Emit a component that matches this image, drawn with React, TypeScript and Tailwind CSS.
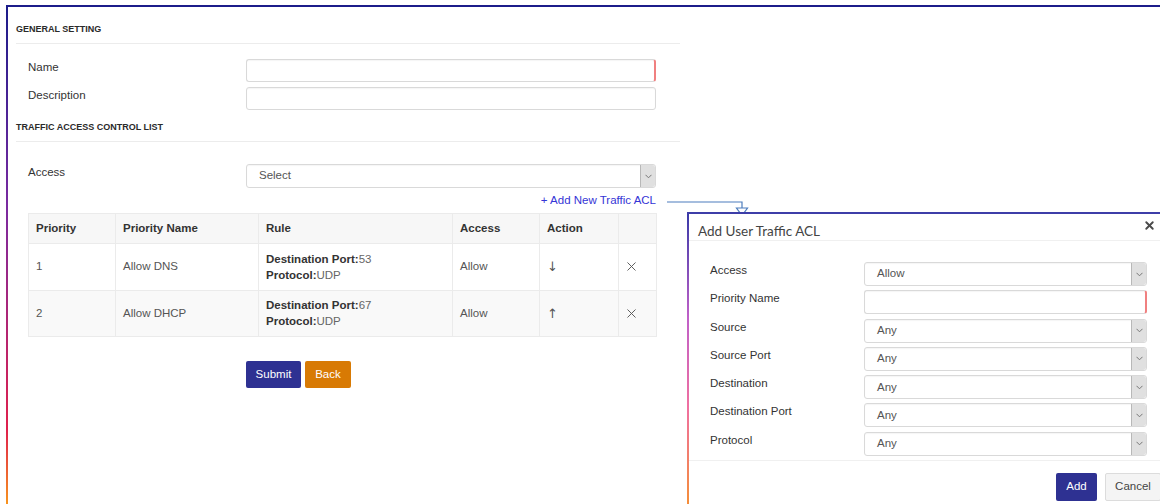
import { X } from 'lucide-react';

type AclRow = {
  priority: string;
  name: string;
  port: string;
  protocol: string;
  access: string;
  move: string;
  shade: boolean;
};

const ROWS: AclRow[] = [
  { priority: '1', name: 'Allow DNS', port: '53', protocol: 'UDP', access: 'Allow', move: '↓', shade: false },
  { priority: '2', name: 'Allow DHCP', port: '67', protocol: 'UDP', access: 'Allow', move: '↑', shade: true },
];

const MODAL_FIELDS = [
  { label: 'Access', value: 'Allow', select: true },
  { label: 'Priority Name', value: '', select: false },
  { label: 'Source', value: 'Any', select: true },
  { label: 'Source Port', value: 'Any', select: true },
  { label: 'Destination', value: 'Any', select: true },
  { label: 'Destination Port', value: 'Any', select: true },
  { label: 'Protocol', value: 'Any', select: true },
];

function Chevron() {
  return (
    <div className="flex h-full w-[15px] items-center justify-center rounded-r-[3px] border-l border-[#b8b8b8] bg-[#e0e0e0]">
      <svg width="7" height="5" viewBox="0 0 7 5" fill="none">
        <polyline points="0.5,0.8 3.5,3.8 6.5,0.8" stroke="#777" strokeWidth="1" />
      </svg>
    </div>
  );
}

function SelectBox({ value, width, height }: { value: string; width: string; height: string }) {
  return (
    <div className={`flex ${width} ${height} items-center justify-between rounded-[3px] border border-[#d9d9d9] bg-white shadow-[inset_0_1px_1px_rgba(0,0,0,0.04)]`}>
      <span className="pl-[12px] text-[11.5px] text-[#555]">{value}</span>
      <Chevron />
    </div>
  );
}

function TextBox({ width, height, required }: { width: string; height: string; required?: boolean }) {
  return (
    <div
      className={`${width} ${height} rounded-[3px] border border-[#d9d9d9] bg-white shadow-[inset_0_1px_1px_rgba(0,0,0,0.04)] ${
        required ? 'border-r-[#f08080] border-r-2' : ''
      }`}
    />
  );
}

function SectionTitle({ children }: { children: string }) {
  return (
    <div className="w-[664px] border-b border-[#ececec] pb-[8px]">
      <div className="text-[9px] font-bold leading-[12px] text-[#2a2a2a]">{children}</div>
    </div>
  );
}

function FormRow({ label, children }: { label: string; children: React.ReactNode }) {
  return (
    <div className="flex items-start">
      <div className="ml-[12px] w-[218px] text-[11.5px] leading-[16px] text-[#333]">{label}</div>
      {children}
    </div>
  );
}

function AclTable() {
  const cols = ['w-[87px]', 'w-[143px]', 'w-[194px]', 'w-[87px]', 'w-[79px]', 'w-[38px]'];
  const heads = ['Priority', 'Priority Name', 'Rule', 'Access', 'Action', ''];
  return (
    <table className="ml-[12px] w-[628px] table-fixed border-collapse text-[11.5px]">
      <thead>
        <tr className="h-[30px] bg-[#f7f7f7]">
          {heads.map((h, i) => (
            <th key={i} className={`${cols[i]} border border-[#ebebeb] px-[7px] text-left font-bold text-[#333]`}>
              {h}
            </th>
          ))}
        </tr>
      </thead>
      <tbody>
        {ROWS.map((r) => (
          <tr key={r.priority} className={`h-[46.5px] ${r.shade ? 'bg-[#f9f9f9]' : 'bg-white'}`}>
            <td className="border border-[#ebebeb] px-[7px] text-[#555]">{r.priority}</td>
            <td className="border border-[#ebebeb] px-[7px] text-[#555]">{r.name}</td>
            <td className="border border-[#ebebeb] px-[7px] leading-[16px] text-[#666]">
              <div>
                <span className="font-bold text-[#333]">Destination Port:</span>
                {r.port}
              </div>
              <div>
                <span className="font-bold text-[#333]">Protocol:</span>
                {r.protocol}
              </div>
            </td>
            <td className="border border-[#ebebeb] px-[7px] text-[#555]">{r.access}</td>
            <td className="border border-[#ebebeb] px-[7px] font-['DejaVu_Sans',sans-serif] text-[13px] text-[#555]">
              {r.move}
            </td>
            <td className="border border-[#ebebeb] px-[5px] text-[#555]">
              <X size={15} strokeWidth={1.5} />
            </td>
          </tr>
        ))}
      </tbody>
    </table>
  );
}

function AddAclModal() {
  return (
    <div className="absolute left-[687px] top-[212px] flex h-[300px] w-[478px] border-t-2 border-[#3d3da8] bg-white">
      <div className="w-[2px] bg-[linear-gradient(to_bottom,#3a3aa8_0%,#c060c8_35%,#f070a0_65%,#f59030_100%)]" />
      <div className="flex flex-1 flex-col">
        <div className="flex h-[27px] items-start justify-between border-b border-[#f0f0f0] pl-[9px] pr-[9px] pt-[8px]">
          <span className="font-['Lato',sans-serif] text-[13.5px] leading-[18px] text-[#444]">Add User Traffic ACL</span>
          <X size={13} strokeWidth={3.5} className="mt-[-3px] text-[#4a4a4a]" />
        </div>
        <div className="flex flex-col gap-[4.3px] border-b border-[#f0f0f0] pb-[4px] pl-[21px] pt-[21px]">
          {MODAL_FIELDS.map((f) => (
            <div key={f.label} className="flex items-start">
              <div className="w-[154px] text-[11.5px] leading-[16px] text-[#333]">{f.label}</div>
              {f.select ? (
                <SelectBox value={f.value} width="w-[283px]" height="h-[24px]" />
              ) : (
                <TextBox width="w-[283px]" height="h-[24px]" required />
              )}
            </div>
          ))}
        </div>
        <div className="flex justify-end gap-[8px] pr-[4px] pt-[12px]">
          <button className="h-[28px] w-[41px] rounded-[2px] bg-[#2e3192] text-[11.5px] text-white">Add</button>
          <button className="h-[28px] w-[56px] rounded-[2px] border border-[#dcdcdc] bg-[#f4f4f4] text-[11.5px] text-[#444]">
            Cancel
          </button>
        </div>
      </div>
    </div>
  );
}

export default function App() {
  return (
    <div className="relative h-[504px] w-[1160px] overflow-hidden bg-white font-['Liberation_Sans',Arial,sans-serif]">
      <div className="ml-[6px] mt-[5px] flex h-[499px] border-t-2 border-[#1c1c8a]">
        <div className="w-[2px] bg-[linear-gradient(to_bottom,#1c1c8a_0%,#7a2aa0_40%,#e0204c_85%,#f7941e_100%)]" />
        <div className="pl-[8px] pt-[16px]">
          <SectionTitle>GENERAL SETTING</SectionTitle>

          <div className="mt-[15px] flex flex-col gap-[5px]">
            <FormRow label="Name">
              <TextBox width="w-[410px]" height="h-[23px]" required />
            </FormRow>
            <FormRow label="Description">
              <TextBox width="w-[410px]" height="h-[23px]" />
            </FormRow>
          </div>

          <div className="mt-[11px]">
            <SectionTitle>TRAFFIC ACCESS CONTROL LIST</SectionTitle>
          </div>

          <div className="mt-[22px]">
            <FormRow label="Access">
              <SelectBox value="Select" width="w-[410px]" height="h-[24px]" />
            </FormRow>
          </div>

          <div className="mt-[5px] flex w-[640px] justify-end text-[11.5px] leading-[14px] text-[#3535d6]">
            + Add New Traffic ACL
          </div>

          <div className="mt-[6px]">
            <AclTable />
          </div>

          <div className="ml-[230px] mt-[24px] flex gap-[4px]">
            <button className="h-[27px] w-[55px] rounded-[2px] bg-[#2e3192] text-[11.5px] text-white">Submit</button>
            <button className="h-[27px] w-[46px] rounded-[2px] bg-[#d87a04] text-[11.5px] text-white">Back</button>
          </div>
        </div>
      </div>

      {/* connector from the link down into the dialog */}
      <svg className="absolute left-[660px] top-[196px]" width="95" height="24" viewBox="0 0 95 24" fill="none">
        <polyline points="7,6 82,6 82,18" stroke="#4d7dbd" strokeWidth="1.2" />
        <polygon points="76.5,12 87.5,12 82,19.5" fill="white" stroke="#4d7dbd" strokeWidth="1.2" />
      </svg>

      <AddAclModal />
    </div>
  );
}
